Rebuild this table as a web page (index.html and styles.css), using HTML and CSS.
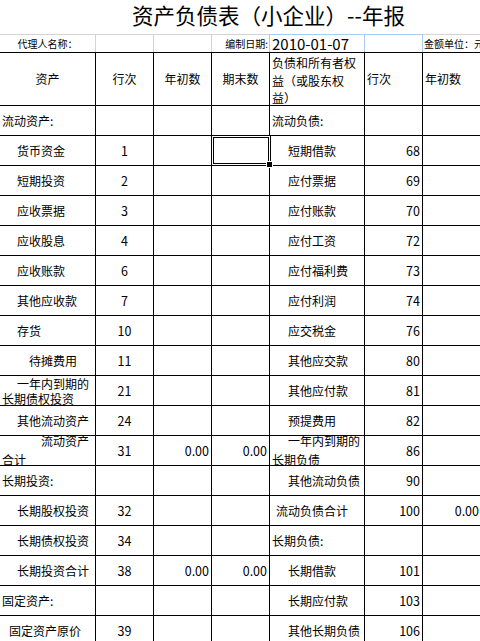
FILE: index.html
```html
<!DOCTYPE html>
<html lang="zh-CN">
<head>
<meta charset="utf-8">
<title>资产负债表（小企业）--年报</title>
<link rel="stylesheet" href="styles.css">
</head>
<body>
<div class="sheet">
  <div class="sheet-title">资产负债表（小企业）--年报</div>

  <div class="meta">
    <div class="m m-ctr">代理人名称：</div>
    <div class="m"></div>
    <div class="m"></div>
    <div class="m m-end">编制日期:</div>
    <div class="m m-sel m-date">2010-01-07</div>
    <div class="m m-sel2"></div>
    <div class="m m-last">金额单位：元</div>
  </div>

  <div class="grid">
    <div class="c ctr">资产</div>
    <div class="c ctr">行次</div>
    <div class="c ctr">年初数</div>
    <div class="c ctr">期末数</div>
    <div class="c lft hd3">负债和所有者权<br>益（或股东权<br>益）</div>
    <div class="c lft">行次</div>
    <div class="c lft">年初数</div>

    <div class="c sec">流动资产:</div><div class="c ctr"></div><div class="c"></div><div class="c"></div>
    <div class="c sec">流动负债:</div><div class="c"></div><div class="c"></div>

    <div class="c item">货币资金</div><div class="c ctr n">1</div><div class="c"></div>
    <div class="c selcell"><div class="sel"><span class="handle"></span></div></div>
    <div class="c ritem">短期借款</div><div class="c num">68</div><div class="c"></div>

    <div class="c item">短期投资</div><div class="c ctr n">2</div><div class="c"></div><div class="c"></div>
    <div class="c ritem">应付票据</div><div class="c num">69</div><div class="c"></div>

    <div class="c item">应收票据</div><div class="c ctr n">3</div><div class="c"></div><div class="c"></div>
    <div class="c ritem">应付账款</div><div class="c num">70</div><div class="c"></div>

    <div class="c item">应收股息</div><div class="c ctr n">4</div><div class="c"></div><div class="c"></div>
    <div class="c ritem">应付工资</div><div class="c num">72</div><div class="c"></div>

    <div class="c item">应收账款</div><div class="c ctr n">6</div><div class="c"></div><div class="c"></div>
    <div class="c ritem">应付福利费</div><div class="c num">73</div><div class="c"></div>

    <div class="c item">其他应收款</div><div class="c ctr n">7</div><div class="c"></div><div class="c"></div>
    <div class="c ritem">应付利润</div><div class="c num">74</div><div class="c"></div>

    <div class="c item">存货</div><div class="c ctr n">10</div><div class="c"></div><div class="c"></div>
    <div class="c ritem">应交税金</div><div class="c num">76</div><div class="c"></div>

    <div class="c item2">待摊费用</div><div class="c ctr n">11</div><div class="c"></div><div class="c"></div>
    <div class="c ritem">其他应交款</div><div class="c num">80</div><div class="c"></div>

    <div class="c wrap w16 ind15">一年内到期的<br>长期债权投资</div><div class="c ctr n">21</div><div class="c"></div><div class="c"></div>
    <div class="c ritem">其他应付款</div><div class="c num">81</div><div class="c"></div>

    <div class="c item">其他流动资产</div><div class="c ctr n">24</div><div class="c"></div><div class="c"></div>
    <div class="c ritem">预提费用</div><div class="c num">82</div><div class="c"></div>

    <div class="c wrap w19 ind39">流动资产<br>合计</div><div class="c ctr n">31</div><div class="c num">0.00</div><div class="c num">0.00</div>
    <div class="c wrap w19 ind16">一年内到期的<br>长期负债</div><div class="c num">86</div><div class="c"></div>

    <div class="c sec">长期投资:</div><div class="c"></div><div class="c"></div><div class="c"></div>
    <div class="c ritem">其他流动负债</div><div class="c num">90</div><div class="c"></div>

    <div class="c item">长期股权投资</div><div class="c ctr n">32</div><div class="c"></div><div class="c"></div>
    <div class="c total">流动负债合计</div><div class="c num">100</div><div class="c num">0.00</div>

    <div class="c item">长期债权投资</div><div class="c ctr n">34</div><div class="c"></div><div class="c"></div>
    <div class="c sec">长期负债:</div><div class="c"></div><div class="c"></div>

    <div class="c item">长期投资合计</div><div class="c ctr n">38</div><div class="c num">0.00</div><div class="c num">0.00</div>
    <div class="c ritem">长期借款</div><div class="c num">101</div><div class="c"></div>

    <div class="c sec">固定资产:</div><div class="c"></div><div class="c"></div><div class="c"></div>
    <div class="c ritem">长期应付款</div><div class="c num">103</div><div class="c"></div>

    <div class="c item3">固定资产原价</div><div class="c ctr n">39</div><div class="c"></div><div class="c"></div>
    <div class="c ritem">其他长期负债</div><div class="c num">106</div><div class="c"></div>
  </div>
</div>
</body>
</html>
```

FILE: styles.css
```css
html, body {
  margin: 0;
  padding: 0;
  background: #fff;
}

body {
  width: 480px;
  height: 641px;
  overflow: hidden;
  font-family: "Noto Sans CJK SC", "Noto Sans", sans-serif;
  color: #000;
}

.sheet {
  width: 480px;
}

.sheet-title {
  box-sizing: border-box;
  width: 480px;
  height: 34px;
  padding-left: 57px;
  line-height: 29px;
  font-size: 21.5px;
  text-align: center;
  white-space: nowrap;
}

/* second row: agent / date / unit */
.meta {
  display: grid;
  grid-template-columns: 96px 58px 58px 57px 96px 58px 1fr;
  height: 18px;
  font-size: 10px;
}

.m {
  box-sizing: border-box;
  border-top: 1px solid #d4d4d4;
  border-right: 1px solid #d4d4d4;
  height: 18px;
  line-height: 17px;
  white-space: nowrap;
}

.m-ctr {
  text-align: center;
}

.m-end {
  border-right: none;
  text-align: right;
  padding-right: 1px;
}

.m-sel {
  border: 1px solid #a9cbec;
  border-bottom: none;
}

.m-sel2 {
  border-top: 1px solid #a9cbec;
  border-right: 1px solid #a9cbec;
}

.m-date {
  font-size: 15px;
  padding-left: 2px;
}

.m-last {
  border-right: none;
  padding-left: 1px;
  overflow: hidden;
}

/* main grid */
.grid {
  display: grid;
  grid-template-columns: 95px 57px 57px 57px 94px 57px 58px;
  grid-template-rows: 52px repeat(18, 29px);
  gap: 1px;
  background: #000;
  border-top: 1px solid #000;
  font-size: 12px;
}

.c {
  background: #fff;
  display: flex;
  align-items: center;
  line-height: 16px;
  white-space: nowrap;
  overflow: hidden;
}

.ctr {
  justify-content: center;
}

.n {
  font-size: 12.5px;
}

.lft {
  padding-left: 2px;
}

.hd3 {
  line-height: 17.5px;
  padding-top: 3px;
}

.num {
  justify-content: flex-end;
  padding-right: 2px;
  font-size: 12.5px;
}

.sec {
  padding-left: 2px;
}

.item {
  padding-left: 17px;
}

.item2 {
  padding-left: 29px;
}

.item3 {
  padding-left: 9px;
}

.ritem {
  padding-left: 18px;
}

.total {
  padding-left: 6px;
}

/* two-line wrapped labels */
.wrap {
  padding-left: 2px;
}

.w16 {
  line-height: 15px;
  padding-top: 1px;
}

.w19 {
  line-height: 18.8px;
}

.ind15 { text-indent: 15px; }
.ind16 { text-indent: 16px; }
.ind39 { text-indent: 39px; }

/* active-cell selection frame */
.selcell {
  position: relative;
  overflow: visible;
}

.sel {
  position: absolute;
  left: -1px;
  top: -1px;
  width: 58px;
  height: 29px;
  border: 1px solid #000;
  box-shadow: inset 0 0 0 1px #fff, inset 0 0 0 2px #000;
  z-index: 2;
}

.handle {
  position: absolute;
  left: 55px;
  top: 26px;
  width: 5px;
  height: 5px;
  background: #000;
  box-shadow: 0 0 0 1px #fff;
}
```
